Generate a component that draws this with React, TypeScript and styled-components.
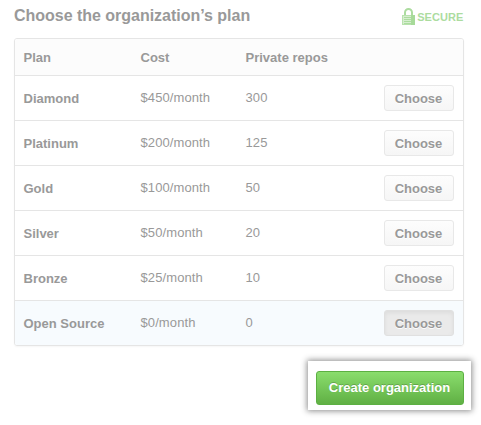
import React from "react";
import styled, { createGlobalStyle, css } from "styled-components";

const GlobalStyle = createGlobalStyle`
  * { box-sizing: border-box; }
  body {
    margin: 0;
    background: #fff;
    color: #999;
    font-family: "Liberation Sans", Arial, sans-serif;
    font-size: 13px;
  }
`;

const Page = styled.main`
  width: 481px;
  height: 425px;
  padding: 6px 17px 0 14px;
  overflow: hidden;
`;

const Header = styled.header`
  display: flex;
  justify-content: space-between;
  height: 32px;
`;

const Title = styled.h1`
  margin: 0;
  font-size: 16px;
  line-height: 20px;
  letter-spacing: -0.02px;
  white-space: nowrap;
`;

const Secure = styled.div`
  display: flex;
  gap: 2px;
  padding: 2px 0.5px 0 0;
  height: 20px;
  color: #acdc9f;
  font-size: 11px;
  font-weight: bold;
  letter-spacing: 0.08px;
  line-height: 18px;
`;

const PlanTable = styled.section`
  border: 1px solid #e5e5e5;
  border-radius: 3px;
  overflow: hidden;
  box-shadow: 0 1px 2px rgba(0, 0, 0, 0.04);
`;

const columns = css`
  display: grid;
  grid-template-columns: 117px 105px 1fr auto;
  align-items: center;
  padding: 0 9px 0 8.5px;
`;

const HeadRow = styled.div`
  ${columns}
  height: 36px;
  background: #fcfcfc;
  font-weight: bold;
  padding-top: 1px;
`;

const Row = styled.div<{ $selected: boolean }>`
  ${columns}
  height: 45px;
  border-top: 1px solid #e5e5e5;
  background: ${(p) => (p.$selected ? "#f7fbfe" : "#fff")};
`;

const PlanName = styled.strong`
  padding-top: 2px;
  line-height: 16px;
`;

const Value = styled.span`
  line-height: 16px;
  letter-spacing: 0.1px;
`;

const ChooseButton = styled.button<{ $selected: boolean }>`
  width: 70px;
  height: 26px;
  padding: 1px 1px 0 0;
  border: 1px solid ${(p) => (p.$selected ? "#e0e0e0" : "#e8e8e8")};
  border-radius: 3px;
  background: ${(p) =>
    p.$selected ? "#eaeaea" : "linear-gradient(#fdfdfd, #f6f6f6)"};
  box-shadow: ${(p) =>
    p.$selected ? "inset 0 2px 4px rgba(0, 0, 0, 0.06)" : "none"};
  color: #999;
  font: bold 13px "Liberation Sans", Arial, sans-serif;
  text-shadow: 0 1px 0 rgba(255, 255, 255, 0.9);
`;

const Spotlight = styled.div`
  width: 163px;
  height: 49px;
  margin: 15px -7px 0 auto;
  padding: 10px 7px 5px 8px;
  background: #fff;
  box-shadow: 0 0 6px 1px rgba(0, 0, 0, 0.45);
`;

const CreateButton = styled.button`
  display: block;
  width: 148px;
  height: 34px;
  padding: 0 1px 0 0;
  border: 1px solid #5cb042;
  border-radius: 3px;
  background: linear-gradient(#8add6d, #60b044);
  color: #fff;
  font: bold 13px/30px "Liberation Sans", Arial, sans-serif;
  text-shadow: 0 -1px 0 rgba(0, 0, 0, 0.2);
  white-space: nowrap;
`;

const plans = [
  { name: "Diamond", cost: "$450/month", repos: 300 },
  { name: "Platinum", cost: "$200/month", repos: 125 },
  { name: "Gold", cost: "$100/month", repos: 50 },
  { name: "Silver", cost: "$50/month", repos: 20 },
  { name: "Bronze", cost: "$25/month", repos: 10 },
  { name: "Open Source", cost: "$0/month", repos: 0 },
];

const selectedPlan = "Open Source";

function LockIcon() {
  return (
    <svg width="13" height="17" viewBox="0 0 13 17" aria-hidden="true">
      <path
        d="M3 8V4.5a3.5 3.5 0 0 1 7 0V8"
        fill="none"
        stroke="#acdc9f"
        strokeWidth="2"
      />
      <rect x="0.5" y="7.5" width="12" height="9" fill="#d6eecf" stroke="#b9e2ae" />
      <path d="M9 7h4v10H9z" fill="#a7da99" />
      <path d="M2 9.5h7M2 11.5h7M2 13.5h7M2 15.5h7" stroke="#acdc9f" />
    </svg>
  );
}

export default function App() {
  return (
    <>
      <GlobalStyle />
      <Page>
        <Header>
          <Title>Choose the organization’s plan</Title>
          <Secure>
            <LockIcon />
            <span>SECURE</span>
          </Secure>
        </Header>
        <PlanTable>
          <HeadRow>
            <span>Plan</span>
            <span>Cost</span>
            <span>Private repos</span>
          </HeadRow>
          {plans.map(({ name, cost, repos }) => {
            const selected = name === selectedPlan;
            return (
              <Row key={name} $selected={selected}>
                <PlanName>{name}</PlanName>
                <Value>{cost}</Value>
                <Value>{repos}</Value>
                <ChooseButton type="button" $selected={selected}>
                  Choose
                </ChooseButton>
              </Row>
            );
          })}
        </PlanTable>
        <Spotlight>
          <CreateButton type="button">Create organization</CreateButton>
        </Spotlight>
      </Page>
    </>
  );
}
